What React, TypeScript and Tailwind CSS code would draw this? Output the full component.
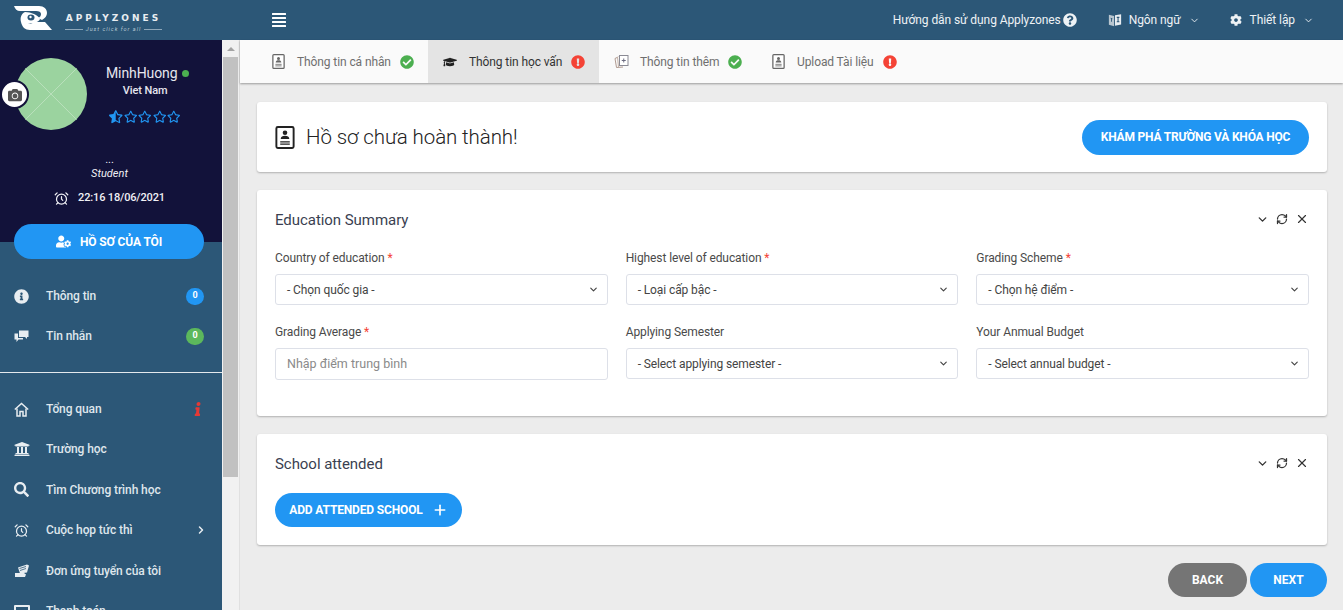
import { AlarmClock, ChevronDown, ChevronRight, Plus, RefreshCw, X } from 'lucide-react';
import {
  FaAlignJustify,
  FaCamera,
  FaCheckCircle,
  FaCog,
  FaExclamationCircle,
  FaGraduationCap,
  FaInfo,
  FaInfoCircle,
  FaQuestionCircle,
  FaRegStar,
  FaSearch,
  FaStarHalfAlt,
  FaUniversity,
  FaUserCog,
} from 'react-icons/fa';

function Portrait({ className }: { className: string }) {
  return (
    <svg className={className} viewBox="0 0 20 24" fill="none">
      <rect x="1" y="1" width="18" height="22" rx="1.5" fill="#fff" stroke="currentColor" strokeWidth="2" />
      <circle cx="10" cy="7" r="2.4" fill="currentColor" />
      <path d="M5.5 13.5c0-2.4 2-3.4 4.500-3.400s4.500 1 4.500 3.400z" fill="currentColor" />
      <path d="M5 16.500h10M5 19h10" stroke="currentColor" strokeWidth="1.300" />
    </svg>
  );
}

function CardsIcon() {
  return (
    <svg className="h-[15px] w-[15px]" viewBox="0 0 15 15" fill="none">
      <path d="M3 3.500L1 4.500l1.500 9 6.500-.5" stroke="#b09a90" strokeWidth="1" />
      <path d="M4.500 2.500l-1 .5 1 10" stroke="#c4b2a8" strokeWidth="1" />
      <rect x="5.500" y="1.500" width="8.500" height="10" fill="#fff" stroke="#8a8a94" strokeWidth="1" />
      <path d="M9.750 4.500v4M7.750 6.500h4" stroke="#6b6b80" strokeWidth="1" />
    </svg>
  );
}

function Logo() {
  return (
    <svg className="h-[25px] w-[38px]" viewBox="0 0 38 25" fill="#fff">
      <path d="M0 0h25c5 0 8 3 8 7 0 3-2 5-5 7l-4-2c2-1 3-2 3-4 0-2-2-3-5-3H6C3 5 1 3 0 0z" />
      <path d="M11 6C7 8 6 12 7 16c1 5 4 8 9 8h22l-7-8H20c-1 2-4 2-6 1 5 1 11-1 12-4-2-4-9-7-15-7z" />
      <ellipse cx="17" cy="11.500" rx="3.500" ry="3" fill="#2c5777" />
      <circle cx="16.500" cy="11" r="1.200" />
    </svg>
  );
}

function TranslateIcon() {
  return (
    <svg className="h-[14px] w-[14px]" viewBox="0 0 16 16">
      <path d="M1 2l6 1.500V15l-6-1.500z" fill="#b9c6d0" />
      <path d="M8 2.500l7-1V13l-7 1.500z" fill="#e8edf1" />
      <path d="M3 6l2 .5M4 6v4" stroke="#2c5777" strokeWidth="1" />
      <path d="M10 5h3M11.500 5v5M10 10h3" stroke="#2c5777" strokeWidth="1.200" />
    </svg>
  );
}

function ChatIcon() {
  return (
    <svg className="h-[14px] w-[15px]" viewBox="0 0 15 14" fill="#e8edf1">
      <path d="M5 1.500h9.500V8H13v2l-2-2H5z" />
      <path d="M.5 4.500H4V9h5v1.500H4.500L2.500 13v-2.500h-2z" />
    </svg>
  );
}

function HomeIcon() {
  return (
    <svg className="h-[15px] w-[15px]" viewBox="0 0 15 15" fill="none" stroke="#e8edf1" strokeWidth="1.500">
      <path d="M.8 7.500L7.500 1.500l6.700 6" />
      <path d="M3 6.500V14h3V9.500h3V14h3V6.500" />
    </svg>
  );
}

function ApplicationIcon() {
  return (
    <svg className="h-[15px] w-[16px]" viewBox="0 0 16 15" fill="#e8edf1">
      <path d="M1 10h9l2 1.500-1 2.500H1z" />
      <path d="M4 4.500l9-3 2 1-2 7-7 1z" />
      <path d="M5.500 5.500l6.500-2M6 7.500l6-2" stroke="#2c5777" strokeWidth="0.800" />
    </svg>
  );
}

function NavRow({ label, icon, right, h }: { label: string; icon: React.ReactNode; right?: React.ReactNode; h: string }) {
  return (
    <div className={`flex items-center pl-[14px] pr-[18px] ${h}`}>
      <div className="flex w-[32px] shrink-0 items-center text-[#e8edf1]">{icon}</div>
      <span className="text-[12px] font-medium tracking-[-0.1px] text-[#dfe6ec]">{label}</span>
      <div className="ml-auto flex items-center">{right}</div>
    </div>
  );
}

function Sidebar() {
  return (
    <aside className="w-[222px] shrink-0 bg-[#2c5777]">
      <div className="h-[202px] bg-[#12123a] px-[14px]">
        <div className="relative flex h-[108px]">
          <div className="absolute left-[-14px] top-[40px] z-10 flex h-[29px] w-[29px] items-center justify-center rounded-full border-[2px] border-[#12123a] bg-white text-[#555]">
            <FaCamera className="h-[14px] w-[14px]" />
          </div>
          <svg className="ml-[1px] mt-[18px] h-[72px] w-[72px] shrink-0" viewBox="0 0 72 72">
            <defs>
              <clipPath id="avatar">
                <circle cx="36" cy="36" r="36" />
              </clipPath>
            </defs>
            <circle cx="36" cy="36" r="36" fill="#9bd39f" />
            <path d="M8 8l56 56M64 8L8 64" stroke="#b9e0bb" strokeWidth="1" clipPath="url(#avatar)" />
          </svg>
          <div className="ml-[19px] flex flex-col items-center pt-[25px]">
            <div className="flex items-center text-[14px] leading-[17px] tracking-[-0.1px] text-[#e6e6ee]">
              MinhHuong
              <span className="ml-[5px] h-[7px] w-[7px] rounded-full bg-[#4caf50]" />
            </div>
            <div className="mt-[1px] pr-[5px] text-[11px] font-medium leading-[16px] tracking-[-0.1px] text-[#e6e6ee]">Viet Nam</div>
            <div className="mt-[11px] flex gap-[1px] pr-[5px] text-[#2196f3]">
              <FaStarHalfAlt className="h-[13.500px] w-[13.500px]" />
              <FaRegStar className="h-[13.500px] w-[13.500px]" />
              <FaRegStar className="h-[13.500px] w-[13.500px]" />
              <FaRegStar className="h-[13.500px] w-[13.500px]" />
              <FaRegStar className="h-[13.500px] w-[13.500px]" />
            </div>
          </div>
        </div>
        <div className="mt-[5px] flex flex-col items-center pr-[3px] text-[#f0f0f5]">
          <div className="text-[11px] leading-[14px]">...</div>
          <div className="text-[11px] italic leading-[14px]">Student</div>
          <div className="mt-[9px] flex items-center gap-[9px] text-[11px] font-medium leading-[16px] tracking-[-0.15px]">
            <AlarmClock className="h-[15px] w-[15px]" />
            22:16 18/06/2021
          </div>
        </div>
        <div className="relative mt-[18px] flex h-[35px] w-[190px] items-center justify-center gap-[9px] rounded-full bg-[#2196f3] text-[12px] font-bold tracking-[-0.15px] text-white">
          <FaUserCog className="h-[15px] w-[15px]" />
          HỒ SƠ CỦA TÔI
        </div>
      </div>
      <div className="pt-[34px]">
        <NavRow
          h="h-[40px]"
          label="Thông tin"
          icon={<FaInfoCircle className="h-[15px] w-[15px]" />}
          right={<span className="flex h-[17px] w-[18px] items-center justify-center rounded-full bg-[#2196f3] text-[9px] font-bold text-white">0</span>}
        />
        <NavRow
          h="h-[40px]"
          label="Tin nhắn"
          icon={<ChatIcon />}
          right={<span className="flex h-[17px] w-[18px] items-center justify-center rounded-full bg-[#5cb85c] text-[9px] font-bold text-white">0</span>}
        />
      </div>
      <div className="mt-[16px] border-t border-[#e4e9ed] pt-[16px]">
        <NavRow h="h-[40px]" label="Tổng quan" icon={<HomeIcon />} right={<FaInfo className="mr-[2px] h-[14px] w-[8px] -skew-x-6 text-[#e53935]" />} />
        <NavRow h="h-[40.500px]" label="Trường học" icon={<FaUniversity className="h-[16px] w-[16px]" />} />
        <NavRow h="h-[40.500px]" label="Tìm Chương trình học" icon={<FaSearch className="h-[15px] w-[15px]" />} />
        <NavRow h="h-[40.500px]" label="Cuộc họp tức thì" icon={<AlarmClock className="h-[15px] w-[15px]" />} right={<ChevronRight className="mr-[-3px] h-[12px] w-[12px]" color="#e8edf1" strokeWidth={3} />} />
        <NavRow h="h-[40.500px]" label="Đơn ứng tuyển của tôi" icon={<ApplicationIcon />} />
        <NavRow h="h-[40.500px]" label="Thanh toán" icon={<span className="h-[13px] w-[16px] rounded-[1px] border-[2px] border-[#e8edf1]" />} />
      </div>
    </aside>
  );
}

function Tab({ label, icon, ok, active, w }: { label: string; icon: React.ReactNode; ok: boolean; active?: boolean; w: string }) {
  return (
    <div className={`flex h-full items-center gap-[10px] pl-[13px] ${w} ${active ? 'bg-[#e4e4e4] text-[#333]' : 'text-[#6f6f6f]'}`}>
      <div className="flex w-[18px] justify-center">{icon}</div>
      <span className="text-[12px] tracking-[-0.1px]">{label}</span>
      {ok ? (
        <FaCheckCircle className="ml-[-1px] h-[14px] w-[14px] text-[#4caf50]" />
      ) : (
        <FaExclamationCircle className="ml-[-1px] h-[14px] w-[14px] text-[#f44336]" />
      )}
    </div>
  );
}

function Field({ label, required, value, input }: { label: string; required?: boolean; value: string; input?: boolean }) {
  return (
    <div>
      <div className="mb-[8px] text-[12px] leading-[16px] tracking-[-0.1px] text-[#4a4a4a]">
        {label}
        {required && <span className="text-[#f44336]"> *</span>}
      </div>
      {input ? (
        <div className="flex h-[32px] items-center rounded-[3px] border border-[#dde0e8] px-[11px] text-[12.500px] text-[#8a8a8a]">{value}</div>
      ) : (
        <div className="flex h-[31px] items-center justify-between rounded-[3px] border border-[#dde0e8] pl-[11px] pr-[8px] text-[12px] tracking-[-0.1px] text-[#444]">
          {value}
          <ChevronDown className="h-[11px] w-[11px] text-[#444]" strokeWidth={2.500} />
        </div>
      )}
    </div>
  );
}

function CardHeader({ title }: { title: string }) {
  return (
    <div className="flex items-center justify-between">
      <h2 className="text-[15px] leading-[20px] tracking-[-0.05px] text-[#3a3f51]">{title}</h2>
      <div className="mb-[2px] flex items-center gap-[7px] text-[#333]">
        <ChevronDown className="h-[13px] w-[13px]" strokeWidth={2.500} />
        <RefreshCw className="h-[12px] w-[12px]" strokeWidth={2.500} />
        <X className="h-[14px] w-[14px]" strokeWidth={2} />
      </div>
    </div>
  );
}

export default function App() {
  return (
    <div className="flex h-[610px] w-[1343px] flex-col overflow-hidden bg-[#ececec] font-['Roboto',sans-serif]">
      <header className="flex h-[40px] shrink-0 items-center bg-[#2c5777] pl-[14px] text-white">
        <div className="mb-[3px]">
          <Logo />
        </div>
        <div className="ml-[13px] flex w-[97px] flex-col items-center pt-[6px]">
          <span className="whitespace-nowrap font-['DejaVu_Sans',sans-serif] text-[9px] font-bold leading-[11px] tracking-[3px] text-[#e8edf1]">APPLYZONES</span>
          <div className="mt-[2px] flex w-full items-center gap-[3px]">
            <span className="h-px flex-1 bg-[#8fa8ba]" />
            <span className="whitespace-nowrap text-[5.500px] italic leading-[7px] tracking-[1px] text-[#b8c8d4]">Just click for all</span>
            <span className="h-px flex-1 bg-[#8fa8ba]" />
          </div>
        </div>
        <FaAlignJustify className="ml-[109px] h-[16px] w-[16px]" />
        <div className="ml-auto flex items-center pr-[29px] text-[12px] tracking-[-0.08px] text-[#eef2f5]">
          <span>Hướng dẫn sử dụng Applyzones</span>
          <FaQuestionCircle className="ml-[2px] h-[14px] w-[14px]" />
          <span className="ml-[31px]"><TranslateIcon /></span>
          <span className="ml-[7px]">Ngôn ngữ</span>
          <ChevronDown className="ml-[8px] h-[11px] w-[11px]" />
          <FaCog className="ml-[30px] h-[12px] w-[12px]" />
          <span className="ml-[8px]">Thiết lập</span>
          <ChevronDown className="ml-[8px] h-[11px] w-[11px]" />
        </div>
      </header>
      <div className="flex min-h-0 flex-1">
        <Sidebar />
        <div className="flex w-[18px] shrink-0 flex-col border-r border-[#e0e0e0] bg-[#f1f1f1]">
          <div className="flex h-[17px] shrink-0 items-center justify-center">
            <span className="h-0 w-0 border-x-[4px] border-b-[4px] border-x-transparent border-b-[#a3a3a3]" />
          </div>
          <div className="mx-[1px] h-[420px] bg-[#c1c1c1]" />
        </div>
        <main className="min-w-0 flex-1">
          <nav className="flex h-[43px] items-center bg-[#fafafa] pl-[16px] shadow-[0_1px_2px_rgba(0,0,0,0.35)]">
            <Tab w="w-[172px]" label="Thông tin cá nhân" ok icon={<Portrait className="h-[15px] w-[13px] text-[#666]" />} />
            <Tab w="w-[171px]" label="Thông tin học vấn" ok={false} active icon={<FaGraduationCap className="h-[14px] w-[14px] text-[#222]" />} />
            <Tab w="w-[157px]" label="Thông tin thêm" ok icon={<CardsIcon />} />
            <Tab w="w-[170px]" label="Upload Tài liệu" ok={false} icon={<Portrait className="h-[15px] w-[13px] text-[#666]" />} />
          </nav>
          <div className="flex flex-col gap-[18px] pl-[17px] pr-[16px] pt-[19px]">
            <section className="flex h-[70px] items-center justify-between rounded-[3px] bg-white px-[18px] shadow-[0_1px_2px_rgba(0,0,0,0.25)]">
              <div className="flex items-center gap-[11px]">
                <Portrait className="h-[23px] w-[20px] text-[#222]" />
                <h1 className="text-[20.500px] font-light leading-[28px] tracking-[-0.1px] text-[#222]">Hồ sơ chưa hoàn thành!</h1>
              </div>
              <div className="flex h-[35px] w-[227px] items-center justify-center rounded-full bg-[#2196f3] text-[12px] font-bold tracking-[-0.2px] text-white">KHÁM PHÁ TRƯỜNG VÀ KHÓA HỌC</div>
            </section>
            <section className="h-[226px] rounded-[3px] bg-white px-[18px] pt-[20px] shadow-[0_1px_2px_rgba(0,0,0,0.25)]">
              <CardHeader title="Education Summary" />
              <div className="mt-[20px] grid grid-cols-3 gap-x-[18px] gap-y-[19px]">
                <Field label="Country of education" required value="- Chọn quốc gia -" />
                <Field label="Highest level of education" required value="- Loại cấp bậc -" />
                <Field label="Grading Scheme" required value="- Chọn hệ điểm -" />
                <Field label="Grading Average" required value="Nhập điểm trung bình" input />
                <Field label="Applying Semester" value="- Select applying semester -" />
                <Field label="Your Anmual Budget" value="- Select annual budget -" />
              </div>
            </section>
            <section className="h-[111px] rounded-[3px] bg-white px-[18px] pt-[20px] shadow-[0_1px_2px_rgba(0,0,0,0.25)]">
              <CardHeader title="School attended" />
              <div className="mt-[19px] flex h-[34px] w-[187px] items-center justify-center gap-[9px] rounded-full bg-[#2196f3] text-[12px] font-bold tracking-[-0.15px] text-white">
                ADD ATTENDED SCHOOL
                <Plus className="h-[16px] w-[16px]" strokeWidth={2.500} />
              </div>
            </section>
            <div className="flex justify-end gap-[3px]">
              <div className="flex h-[34px] w-[79px] items-center justify-center rounded-full bg-[#757575] text-[12px] font-bold text-white">BACK</div>
              <div className="flex h-[34px] w-[77px] items-center justify-center rounded-full bg-[#2196f3] text-[12px] font-bold text-white">NEXT</div>
            </div>
          </div>
        </main>
      </div>
    </div>
  );
}
